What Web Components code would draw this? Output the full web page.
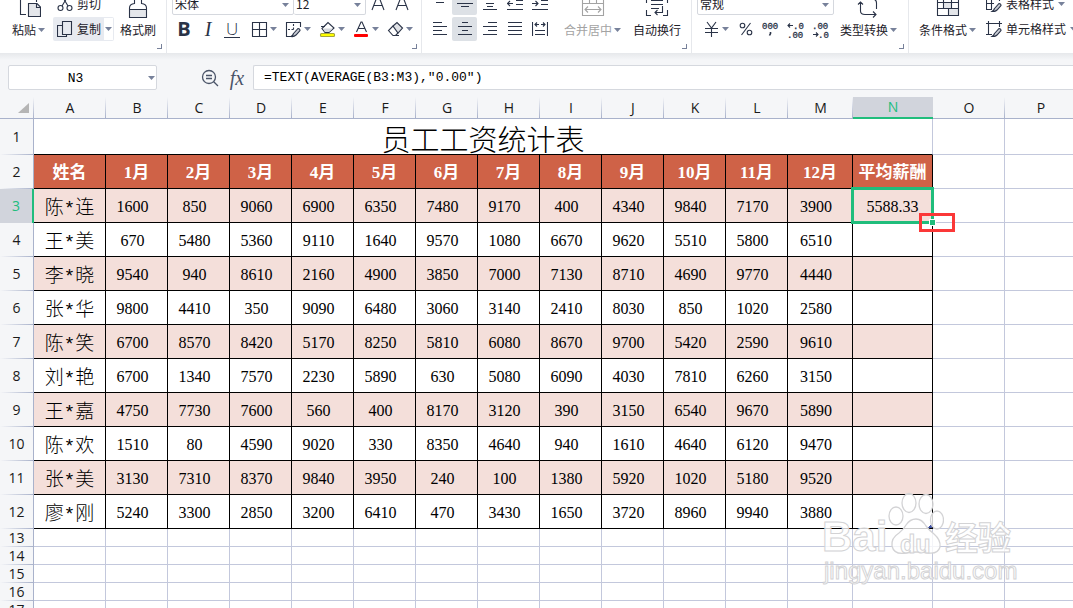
<!DOCTYPE html>
<html lang="zh-CN">
<head>
<meta charset="utf-8">
<title>员工工资统计表</title>
<style>
  html, body { margin: 0; height: 100%; }
  body {
    overflow: hidden;
    background: #f5f6f8;
    color: #1d2129;
    font: 12px/16px "Noto Sans CJK SC", sans-serif;
    --ink: #2a3347;
    --green: #20bd7c;
  }
</style>
</head>
<body>
<sheet-app>
  <app-ribbon slot="ribbon">
    <ribbon-group class="clip">
      <tool-button large icon="paste" caret style="--w:41px">粘贴</tool-button>
      <tool-rows style="--w:61px">
        <tool-button slot="top" icon="cut" inline>剪切</tool-button>
        <tool-button slot="bottom" icon="copy" inline caret boxed on>复制</tool-button>
      </tool-rows>
      <tool-button large icon="brush" style="--w:40px">格式刷</tool-button>
    </ribbon-group>
    <ribbon-group class="font">
      <tool-rows>
        <pick-list slot="top" label="字体" value="宋体" style="--w:122px"></pick-list>
        <pick-list slot="top" label="字号" value="12" style="--w:72px" joined></pick-list>
        <tool-button slot="top" icon="grow" label="增大字号" style="--w:24px"></tool-button>
        <tool-button slot="top" icon="shrink" label="减小字号" style="--w:24px"></tool-button>
        <tool-button slot="bottom" glyph="b" style="--w:24px">B</tool-button>
        <tool-button slot="bottom" glyph="i" style="--w:24px">I</tool-button>
        <tool-button slot="bottom" glyph="u" style="--w:24px; margin-right:7px">U</tool-button>
        <tool-button slot="bottom" icon="borders" label="边框" caret split style="--w:34px"></tool-button>
        <tool-button slot="bottom" icon="draw" label="绘制边框" caret split style="--w:34px"></tool-button>
        <tool-button slot="bottom" icon="fill" label="填充颜色" caret split style="--w:34px"></tool-button>
        <tool-button slot="bottom" icon="color" label="字体颜色" caret split style="--w:34px"></tool-button>
        <tool-button slot="bottom" icon="erase" label="清除" caret split style="--w:34px"></tool-button>
      </tool-rows>
    </ribbon-group>
    <ribbon-group class="align">
      <tool-rows>
        <tool-button slot="top" icon="vtop" label="顶端对齐" style="--w:25px"></tool-button>
        <tool-button slot="top" icon="vmid" label="垂直居中" on style="--w:25px"></tool-button>
        <tool-button slot="top" icon="vbot" label="底端对齐" style="--w:25px"></tool-button>
        <tool-button slot="top" icon="outdent" label="减少缩进" style="--w:25px"></tool-button>
        <tool-button slot="top" icon="indent" label="增加缩进" style="--w:25px"></tool-button>
        <tool-button slot="bottom" icon="left" label="左对齐" style="--w:25px"></tool-button>
        <tool-button slot="bottom" icon="center" label="水平居中" on style="--w:25px"></tool-button>
        <tool-button slot="bottom" icon="right" label="右对齐" style="--w:25px"></tool-button>
        <tool-button slot="bottom" icon="justify" label="两端对齐" style="--w:25px"></tool-button>
        <tool-button slot="bottom" icon="spread" label="分散对齐" style="--w:25px"></tool-button>
      </tool-rows>
      <tool-button large icon="merge" caret dim style="--w:57px">合并居中</tool-button>
      <tool-button large icon="wrap" style="--w:48px">自动换行</tool-button>
    </ribbon-group>
    <ribbon-group class="number">
      <tool-rows>
        <pick-list slot="top" label="数字格式" value="常规" style="--w:137px"></pick-list>
        <tool-button slot="bottom" icon="yen" label="会计格式" caret split style="--w:30px; margin-left:6px"></tool-button>
        <tool-button slot="bottom" icon="percent" label="百分比" style="--w:25px"></tool-button>
        <tool-button slot="bottom" icon="comma" label="千位分隔" style="--w:25px"></tool-button>
        <tool-button slot="bottom" icon="moredec" label="增加小数位" style="--w:25px"></tool-button>
        <tool-button slot="bottom" icon="lessdec" label="减少小数位" style="--w:25px"></tool-button>
      </tool-rows>
      <tool-button large icon="convert" caret style="--w:57px">类型转换</tool-button>
    </ribbon-group>
    <ribbon-group class="style" last>
      <tool-button large icon="cond" caret style="--w:57px">条件格式</tool-button>
      <tool-rows>
        <tool-button slot="top" icon="tstyle" inline caret>表格样式</tool-button>
        <tool-button slot="bottom" icon="cstyle" inline caret>单元格样式</tool-button>
      </tool-rows>
    </ribbon-group>
  </app-ribbon>
  <formula-bar slot="formula" cell="N3" formula='=TEXT(AVERAGE(B3:M3),"0.00")'></formula-bar>
  <sheet-grid slot="sheet"></sheet-grid>
  <site-mark slot="mark"></site-mark>
</sheet-app>

<script>
const make = (name, html, setup) => customElements.define(name, class extends HTMLElement {
  connectedCallback() {
    if (this.shadowRoot) return;
    const root = this.attachShadow({ mode: "open" });
    root.innerHTML = typeof html === "function" ? html(this) : html;
    if (setup) setup(this, root);
  }
});

const CARET = '<svg class="caret" width="7" height="4" viewBox="0 0 7 4"><path d="M0 0H7L3.5 4Z" fill="#77819a"/></svg>';
const PENCIL = '<path d="M8.5 12.5L13 7.5Q15 7.5 15 9.5L11 14Q9 16 6 15.5Q8 14.5 8.5 12.5Z" fill="#c9cdd5"/>';
const num = (x, y, t) => `<text x="${x}" y="${y}" font-family="Liberation Mono" font-size="9" fill="#2a3347" stroke="#2a3347" stroke-width=".3">${t}</text>`;

/* name: [width, height, markup] */
const ICONS = {
  paste: [24, 24, '<path d="M3.5 0V20.5H9M19.5 0V8"/><path d="M11.5 9.5H20L23.5 13V22.5H11.5Z" fill="#e4e6ea"/><path d="M19.5 9.5V13.5H23.5"/>'],
  cut: [16, 16, '<circle cx="3.5" cy="12" r="2.5"/><circle cx="12.5" cy="12" r="2.5"/><path d="M5 10L11 0M11 10L5 0"/>'],
  copy: [16, 16, '<path d="M5.5 .5H14.5V13.5H5.5Z"/><path d="M5 4.5H.5V15.5H9.5V14"/>'],
  brush: [24, 24, '<path d="M4 15.5H20V23H4Z" fill="#e4e6ea" stroke="none"/><path d="M8.5 0V9.5Q3.5 10 3.5 14V23.5H20.5V14Q20.5 10 15.5 9.5V0M3.5 15.5H20.5"/>'],
  grow: [16, 22, '<path d="M2 17L7 4H9L14 17M4 12.5H12"/>'],
  shrink: [16, 22, '<path d="M2 17L7 4H9L14 17M4 12.5H12"/>'],
  borders: [17, 17, '<path d="M1.5 1.5H15.5V15.5H1.5ZM8.5 1.5V15.5M1.5 8.5H15.5"/>'],
  draw: [17, 17, '<path d="M6 15.5H1.5V1.5H15.5V6"/><path d="M8.5 3V8.5M3 8.5H10" stroke-dasharray="2 1.5"/>' + PENCIL],
  fill: [17, 17, '<path d="M2 5.5H6M3 7.5L9 1.5L15 7L10 11.5H6Z" /><path d="M4 7.5H14L10 11H6Z" fill="#d4d7dd" stroke="none"/><rect x="1.5" y="12.5" width="14" height="3" rx="1" fill="#ff0" stroke="#a5a53c"/>'],
  color: [17, 17, '<path d="M3.5 11L8 1H9L13.5 11M5 7.5H12"/><rect x="1" y="13" width="14" height="3" rx="1" fill="#f00" stroke="none"/>'],
  erase: [17, 17, '<path d="M6 5L10 1.5L15.5 7L11 12Z" fill="#e0e2e6"/><path d="M6 5L1.5 9.5L6 14.5H8.5L11 12M9 14.5H12"/>'],
  vtop: [16, 22, '<path d="M4 3.5H12M4 9.5H12"/>'],
  vmid: [16, 22, '<path d="M4 6.5H12M0 10.5H16M4 13.5H12"/>'],
  vbot: [16, 22, '<path d="M4 10.5H12M5 13.5H11M1 16.5H15"/>'],
  outdent: [16, 22, '<path d="M0 10.5H6M3 8L.5 10.5L3 13M9 7.5H16M9 11.5H16M0 16.5H16"/>'],
  indent: [16, 22, '<path d="M0 10.5H6M3.5 8L6 10.5L3.5 13M9 7.5H16M9 11.5H16M0 16.5H16"/>'],
  left: [14, 14, '<path d="M0 .5H9M0 4.5H14M0 8.5H9M0 12.5H14"/>'],
  center: [14, 14, '<path d="M4 .5H10M0 4.5H14M4 8.5H10M0 12.5H14"/>'],
  right: [14, 14, '<path d="M5 .5H14M0 4.5H14M5 8.5H14M0 12.5H14"/>'],
  justify: [14, 14, '<path d="M0 .5H14M0 4.5H14M0 8.5H14M0 12.5H14"/>'],
  spread: [16, 14, '<path d="M.5 0V14M15.5 0V14M3 8.5H13M3 12.5H13M3 2.5H7M9 2.5H13M5 .5L3 2.5L5 4.5M11 .5L13 2.5L11 4.5"/>'],
  merge: [24, 24, '<path d="M1.5 0V21.5H22.5V0M1.5 9.5H22.5M8.5 0V9M15.5 0V9M4 15.5H20M7 12.5L4 15.5L7 18.5M17 12.5L20 15.5L17 18.5"/>'],
  wrap: [24, 24, '<path d="M1.5 16V21.5H6M18 21.5H22.5V16M1.5 4V9M22.5 4V9M6 6.5H18M6 10.5H18M6 14.5H14M17.5 12V18.5H10M12.5 16L10 18.5L12.5 21"/>'],
  yen: [17, 17, '<path d="M4 1L8.5 7L13 1M2 7.5H15M2 11.5H15M8.5 7.5V16"/>'],
  percent: [14, 14, '<circle cx="3.5" cy="3.5" r="2.3"/><circle cx="10.5" cy="10.5" r="2.3"/><path d="M11.5 1L2.5 13"/>'],
  comma: [17, 17, num(0, 8, "000") + '<path d="M8.500 11V12.500L7.500 14.500" stroke-width="1.6"/>'],
  moredec: [17, 17, '<path d="M1 4.5H6M3 2.5L1 4.5L3 6.5"/>' + num(6, 8, ".0") + num(0, 17, ".00")],
  lessdec: [17, 17, num(0, 8, ".00") + '<path d="M1 13.5H6M4 11.5L6 13.5L4 15.5"/>' + num(6, 17, ".0")],
  convert: [24, 24, '<path d="M3.5 8V17Q3.5 20.5 8 20.5H19M16 17.5L19 20.5L16 23.5M5 5H15Q19.5 5 19.5 9V15M1 10.5L3.5 8L6 10.5"/>'],
  cond: [24, 24, '<path d="M7 8.5H15.5V14.5H7ZM12 14.5H22V21.5H12Z" fill="#e4e6ea" stroke="none"/><path d="M1.5 0V21.5H22.5V0M1.5 8.5H22.5M1.5 14.5H22.5M7.5 3V14M15.5 3V14M12.5 14V21"/>'],
  tstyle: [16, 16, '<path d="M6 13.5H.5V2H13.5V5M.5 7.5H8M5.5 2V13" />' + PENCIL],
  cstyle: [16, 16, '<path d="M2.5 0V14M0 2.5H16M0 13.5H6M13.5 0V6"/>' + PENCIL]
};

make("tool-icon", el => {
  const [w, h, body] = ICONS[el.getAttribute("name")];
  return `<style>:host{display:block;flex:none}svg{display:block}</style>
  <svg width="${w}" height="${h}" viewBox="0 0 ${w} ${h}" fill="none" stroke="currentColor" stroke-width="1.1" aria-hidden="true">${body}</svg>`;
});

make("tool-button", el => {
  const icon = el.getAttribute("icon"), label = el.getAttribute("label");
  const caret = el.hasAttribute("caret") ? CARET : "";
  return `<style>
    :host { display:block; flex:none; width:var(--w,auto); }
    button { all:unset; box-sizing:border-box; width:100%; height:100%; display:flex; align-items:center; justify-content:center; color:var(--ink); cursor:default; }
    .text { display:flex; align-items:center; justify-content:center; gap:2px; color:#1d2129; white-space:nowrap; }
    .caret { flex:none; display:block; }
    :host([large]) button { flex-direction:column; justify-content:flex-end; gap:4px; padding-bottom:3px; }
    :host([split]) button { justify-content:flex-start; gap:2px; }
    :host([inline]) button { justify-content:flex-start; gap:4px; padding-left:4px; }
    :host([inline]) .text { gap:4px; }
    :host([on]) button { background:#dde1e6; border-radius:2px; }
    :host([boxed]) button { background:#e7eaf0; }
    :host([boxed]) .caret { background:#fff; padding:9px 1px; }
    :host([boxed]) .text { gap:3px; }
    :host([dim]) button, :host([dim]) .text { color:#a3a3a3; }
    :host([glyph]) .text { font:20px/24px "Open Sans",sans-serif; color:var(--ink); }
    :host([glyph=b]) .text { font-weight:700; }
    :host([glyph=i]) .text { font:italic 20px/24px "Liberation Serif",serif; }
    :host([glyph=u]) .text { font-size:17px; font-weight:300; line-height:16px; padding:0 2px; border-bottom:1px solid var(--ink); }
  </style>
  <button type="button" ${label ? `aria-label="${label}"` : ""}>
    ${icon ? `<tool-icon name="${icon}"></tool-icon>` : ""}
    ${label ? caret : `<span class="text"><slot></slot>${caret}</span>`}
  </button>`;
});

make("pick-list", el => `<style>
    :host { position:relative; box-sizing:border-box; flex:none; width:var(--w); height:22px; border:1px solid #d5d8de; border-radius:2px; background:#fff; display:flex; align-items:center; }
    :host([joined]) { border-left:0; }
    select { all:unset; box-sizing:border-box; width:100%; padding-left:2px; line-height:20px; color:#1d2129; }
    .caret { position:absolute; right:4px; top:9px; pointer-events:none; }
  </style>
  <select aria-label="${el.getAttribute("label")}"><option>${el.getAttribute("value")}</option></select>${CARET}`);

make("tool-rows", `<style>
    :host { display:grid; grid-template-rows:22px 24px; row-gap:2px; flex:none; width:var(--w,auto); }
    div { display:flex; align-items:stretch; }
    ::slotted(tool-button[boxed]) { width:100%; }
  </style>
  <div><slot name="top"></slot></div><div><slot name="bottom"></slot></div>`);

make("ribbon-group", el => `<style>
    :host { position:relative; box-sizing:border-box; flex:none; display:flex; align-items:stretch; height:60px; padding:0 0 12px 5px; border-right:1px solid #e6e8ec; }
    :host(.clip) { padding-left:8px; padding-right:8px; gap:4px; }
    :host(.align) { gap:12px; padding-right:10px; }
    :host(.number) { gap:6px; padding-right:11px; }
    :host(.style) { gap:6px; padding-left:10px; flex:1 1 0; min-width:0; }
    :host([last]) { border:0; }
    i { position:absolute; right:4px; bottom:4px; width:4px; height:4px; border:solid #77819a; border-width:0 1px 1px 0; }
  </style><slot></slot>${el.hasAttribute("last") ? "" : "<i></i>"}`);

make("app-ribbon", `<style>
    :host { display:flex; flex:none; align-items:flex-end; height:53px; overflow:hidden; background:#fff; }
  </style><slot></slot>`);

make("formula-bar", el => `<style>
    :host { display:flex; flex:none; align-items:center; padding:12px 0 7px 8px; background:linear-gradient(#e6e8eb,#f5f6f8 7px); }
    .name { position:relative; width:149px; height:25px; flex:none; }
    input { box-sizing:border-box; width:100%; height:25px; border:1px solid #d5d8de; border-radius:2px; background:#fff; color:#000; font:13px/16px "Liberation Mono",monospace; outline:0; margin:0; display:block; }
    .name input { text-align:center; padding:2px 14px 0 0; }
    .name .caret { position:absolute; right:2px; top:11px; }
    button { all:unset; display:flex; color:#4a5468; }
    .find { margin-left:44px; }
    .fx { width:24px; margin-right:0; justify-content:center; font:italic 20px/24px "Liberation Serif",serif; margin-left:6px; }
    .formula { flex:1; margin-left:4px; border-right:0; padding:0 0 1px 10px; border-radius:2px 0 0 2px; }
  </style>
  <div class="name"><input aria-label="名称框" value="${el.getAttribute("cell")}">${CARET}</div>
  <button class="find" type="button" aria-label="查找"><svg width="18" height="18" viewBox="0 0 18 18" fill="none" stroke="currentColor" stroke-width="1.3"><circle cx="8" cy="8" r="6.5"/><path d="M5 6.5H11M5 9.5H11M12.7 12.7L17 17"/></svg></button>
  <button class="fx" type="button">fx</button>
  <input class="formula" aria-label="公式">`,
  (el, root) => { root.querySelector(".formula").value = el.getAttribute("formula"); });

const DATA = [
  ["陈*连", 1600, 850, 9060, 6900, 6350, 7480, 9170, 400, 4340, 9840, 7170, 3900],
  ["王*美", 670, 5480, 5360, 9110, 1640, 9570, 1080, 6670, 9620, 5510, 5800, 6510],
  ["李*晓", 9540, 940, 8610, 2160, 4900, 3850, 7000, 7130, 8710, 4690, 9770, 4440],
  ["张*华", 9800, 4410, 350, 9090, 6480, 3060, 3140, 2410, 8030, 850, 1020, 2580],
  ["陈*笑", 6700, 8570, 8420, 5170, 8250, 5810, 6080, 8670, 9700, 5420, 2590, 9610],
  ["刘*艳", 6700, 1340, 7570, 2230, 5890, 630, 5080, 6090, 4030, 7810, 6260, 3150],
  ["王*嘉", 4750, 7730, 7600, 560, 400, 8170, 3120, 390, 3150, 6540, 9670, 5890],
  ["陈*欢", 1510, 80, 4590, 9020, 330, 8350, 4640, 940, 1610, 4640, 6120, 9470],
  ["张*美", 3130, 7310, 8370, 9840, 3950, 240, 100, 1380, 5920, 1020, 5180, 9520],
  ["廖*刚", 5240, 3300, 2850, 3200, 6410, 470, 3430, 1650, 3720, 8960, 9940, 3880]
];

make("sheet-grid", () => {
  const cols = "ABCDEFGHIJKLMNOP".split("");
  const heads = ["姓名", ...Array.from({ length: 12 }, (_, i) => `${i + 1}月`), "平均薪酬"];
  const blank = n => "<td></td>".repeat(n);
  const rowHead = n => `<th scope="row" class="rh${n === 3 ? " cur" : ""}">${n}</th>`;
  let body = `<tr class="r1">${rowHead(1)}<td colspan="14" class="title">员工工资统计表</td>${blank(2)}</tr>`;
  body += `<tr class="r2">${rowHead(2)}${heads.map(h => `<td class="hd">${h}</td>`).join("")}${blank(2)}</tr>`;
  DATA.forEach((row, i) => {
    const last = i === 0
      ? '<td class="d avg">5588.33<span class="sel"></span><span class="grip"></span><span class="callout"></span></td>'
      : `<td class="d${i === 9 ? " end" : ""}"></td>`;
    body += `<tr class="${i % 2 ? "" : "band"}">${rowHead(i + 3)}<td class="d nm">${row[0]}</td>${row.slice(1).map(v => `<td class="d n">${v}</td>`).join("")}${last}${blank(2)}</tr>`;
  });
  for (let n = 13; n <= 17; n++) body += `<tr class="low">${rowHead(n)}${blank(16)}</tr>`;
  const widths = [34, 72, ...Array(11).fill(62), 65, 80, 72];
  return `<style>
    :host { display:block; flex:1; min-height:0; overflow:hidden; background:#fff; }
    table { table-layout:fixed; width:100%; min-width:1077px; border-collapse:separate; border-spacing:0; }
    th, td { box-sizing:border-box; padding:0; text-align:center; vertical-align:middle; white-space:nowrap; border:solid #c3c8dc; border-width:0 1px 1px 0; }
    th { font:14px/16px "Open Sans",sans-serif; color:#1a1a1a; background:#f5f6f8; }
    thead th { height:22px; border-right:0; border-bottom-color:#a9b2cb; background:linear-gradient(to bottom,transparent,#a9b2cb) right/1px 100% no-repeat #f5f6f8; }
    thead th.cur { background:#d1d4dc; color:var(--green); border-bottom:2px solid var(--green); }
    thead svg { display:block; margin-left:18px; }
    .rh { border-bottom:0; border-right-color:#a9b2cb; background:linear-gradient(to right,transparent,#a9b2cb) bottom/100% 1px no-repeat #f5f6f8; }
    .rh.cur { background:#d1d4dc; color:var(--green); border-right:2px solid var(--green); }
    tr { height:34px; }
    thead tr { height:22px; }
    .r1 { height:36px; }
    .low { height:18px; }
    .title { font:29px/32px "Noto Sans CJK SC",sans-serif; font-weight:300; color:#000; border-bottom-color:#000; padding-top:3px; }
    .hd { background:#cf6247; color:#fff; font:bold 17px/24px "Liberation Serif","Noto Sans CJK SC",serif; border-color:#000; padding-top:3px; }
    .d { border-color:#000; color:#000; font:16px/20px "Liberation Serif",serif; padding-top:3px; }
    .n { padding-right:8px; }
    .nm { font:19px/24px "Liberation Mono","Noto Sans CJK SC",sans-serif; font-weight:300; padding-top:6px; }
    .band .d { background:#f4dfda; }
    .avg, .end { position:relative; }
    .sel { position:absolute; inset:-2px; border:3px solid var(--green); }
    .grip { position:absolute; right:-4px; bottom:-4px; width:5px; height:5px; background:var(--green); border:1px solid #fff; }
    .callout { position:absolute; left:66px; top:24px; width:30px; height:13px; border:3px solid #fb3838; }
    .end::after { content:""; position:absolute; right:0; bottom:0; width:5px; height:5px; background:linear-gradient(135deg,transparent 50%,#3f51a5 50%); }
  </style>
  <table>
    <colgroup>${widths.map(w => `<col style="width:${w}px">`).join("")}<col></colgroup>
    <thead><tr><th><svg width="12" height="12" viewBox="0 0 12 12"><path d="M11 1V11H0Z" fill="#b5b5b5"/></svg></th>${cols.map(c => `<th scope="col"${c === "N" ? ' class="cur"' : ""}>${c}</th>`).join("")}</tr></thead>
    <tbody>${body}</tbody>
  </table>`;
});

make("site-mark", `<style>
    :host { position:absolute; left:822px; top:492px; width:196px; height:90px; color:rgba(255,255,255,.8); -webkit-text-stroke:1px #d3d3d5; white-space:nowrap; pointer-events:none; }
    span, svg { position:absolute; }
    .bai { left:0; top:26px; font:bold 42px/38px "Liberation Sans",sans-serif; }
    svg { left:66px; top:0; }
    .du { left:78px; top:40px; font:bold 25px/24px "Liberation Sans",sans-serif; }
    .exp { left:123px; top:26px; font:bold 33px/36px "Noto Sans CJK SC",sans-serif; }
    .url { left:2px; top:67px; font:24px/24px "Liberation Sans",sans-serif; }
  </style>
  <span class="bai">Bai</span>
  <svg width="56" height="64" viewBox="0 0 56 64" fill="#fff" fill-opacity=".8" stroke="#d3d3d5" stroke-width="1.3">
    <ellipse cx="8" cy="24" rx="7" ry="9"/><ellipse cx="21" cy="11" rx="7" ry="9.500"/><ellipse cx="38" cy="12" rx="7" ry="9.500"/><ellipse cx="49" cy="28" rx="6.500" ry="9"/>
    <path d="M28 27Q34 27 38 34Q41 38 46 42Q53 48 52 55Q50 62 41 61Q29 59 18 61Q6 63 4 54Q3 46 11 41Q16 37 18 33Q22 27 28 27Z"/>
  </svg>
  <span class="du">du</span><span class="exp">经验</span><span class="url">jingyan.baidu.com</span>`);

make("sheet-app", `<style>
    :host { position:relative; display:flex; flex-direction:column; height:100vh; overflow:hidden; }
  </style>
  <slot name="ribbon"></slot><slot name="formula"></slot><slot name="sheet"></slot><slot name="mark"></slot>`);
</script>
</body>
</html>
